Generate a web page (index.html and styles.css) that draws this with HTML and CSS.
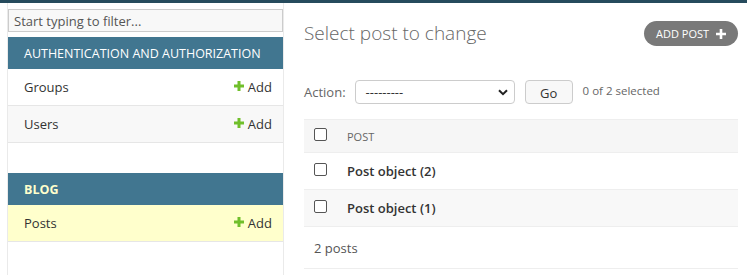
FILE: index.html
```html
<!DOCTYPE html>
<html>
<head>
<meta charset="utf-8">
<link rel="stylesheet" href="styles.css">
</head>
<body>
<div class="topbar"></div>
<div class="layout">
  <div class="toggle"></div>
  <nav class="sidebar">
    <input class="filter" type="text" placeholder="Start typing to filter...">
    <div class="module">
      <div class="caption">Authentication and Authorization</div>
      <div class="row"><span class="name">Groups</span><span class="add"><svg class="plus" viewBox="0 0 10 10"><path d="M3.5 0h3v3.5H10v3H6.5V10h-3V6.5H0v-3h3.5z" fill="#70bf2b"/></svg>Add</span></div>
      <div class="row alt"><span class="name">Users</span><span class="add"><svg class="plus" viewBox="0 0 10 10"><path d="M3.5 0h3v3.5H10v3H6.5V10h-3V6.5H0v-3h3.5z" fill="#70bf2b"/></svg>Add</span></div>
    </div>
    <div class="module current">
      <div class="caption">Blog</div>
      <div class="row active"><span class="name">Posts</span><span class="add"><svg class="plus" viewBox="0 0 10 10"><path d="M3.5 0h3v3.5H10v3H6.5V10h-3V6.5H0v-3h3.5z" fill="#70bf2b"/></svg>Add</span></div>
    </div>
  </nav>
  <main class="content">
    <div class="head">
      <h1 class="title">Select post to change</h1>
      <a class="addbtn">Add post<svg class="addplus" viewBox="0 0 10 10"><path d="M3.7 0h2.6v3.7H10v2.6H6.3V10H3.7V6.3H0V3.7h3.7z" fill="#fff"/></svg></a>
    </div>
    <div class="actions">
      <span class="label">Action:</span>
      <span class="select"><span>---------</span><svg class="chev" viewBox="0 0 10 7"><path d="M1 1.2l4 4 4-4" fill="none" stroke="#222" stroke-width="2"/></svg></span>
      <span class="go">Go</span>
      <span class="counter">0 of 2 selected</span>
    </div>
    <div class="table">
      <div class="trow thead"><span class="cb"></span><span class="col">Post</span></div>
      <div class="trow"><span class="cb"></span><span class="obj">Post object (2)</span></div>
      <div class="trow alt"><span class="cb"></span><span class="obj">Post object (1)</span></div>
    </div>
    <div class="paginator">2 posts</div>
  </main>
</div>
</body>
</html>
```
FILE: styles.css
```css
* { box-sizing: border-box; }
html, body { margin: 0; padding: 0; background: #fff; }
body {
  font-family: "Open Sans", "Noto Sans", sans-serif;
  font-size: 13px;
  color: #333;
  width: 747px;
  height: 275px;
  overflow: hidden;
}
.topbar { height: 3px; background: #264b5d; }
.layout { display: flex; height: 272px; }
.toggle { width: 8px; border-right: 1px solid #eaeaea; flex: none; }
.sidebar {
  width: 276px;
  flex: none;
  border-right: 1px solid #eaeaea;
  padding-top: 6px;
}
.filter {
  display: block;
  width: 275px;
  height: 23px;
  margin: 0 0 5px 0;
  padding: 2px 5px;
  border: 1px solid #ccc;
  background: #f8f8f8;
  font-family: inherit;
  font-size: 13px;
  color: #333;
  outline: none;
}
.filter::placeholder { color: #555; }
.module { margin-bottom: 30px; width: 275px; }
.caption {
  height: 32px;
  background: #417690;
  color: #fff;
  text-transform: uppercase;
  font-size: 12.5px;
  padding-left: 16px;
  display: flex;
  align-items: center;
}
.current .caption { color: #ffc; font-weight: 700; }
.row {
  height: 37px;
  border-bottom: 1px solid #e6e6e6;
  display: flex;
  align-items: center;
  justify-content: space-between;
  padding: 0 11px 0 16px;
  color: #333;
}
.row.alt { background: #f8f8f8; }
.row.active { background: #ffc; }
.add { display: flex; align-items: center; }
.plus { width: 10px; height: 10px; margin-right: 4px; margin-top: -3px; }
.content { flex: 1; padding: 0 9px 0 20px; }
.head {
  display: flex;
  justify-content: space-between;
  align-items: flex-start;
  height: 77px;
}
.title {
  margin: 16px 0 0 0;
  font-size: 19px;
  font-weight: 300;
  color: #666;
  line-height: 28px;
}
.addbtn {
  margin-top: 18px;
  height: 25px;
  width: 94px;
  border-radius: 13px;
  background: #797979;
  color: #fff;
  text-transform: uppercase;
  font-size: 11px;
  display: flex;
  align-items: center;
  padding-left: 12px;
}
.addplus { width: 10px; height: 10px; margin-left: 7px; }
.actions { display: flex; align-items: center; height: 24px; }
.label { color: #666; margin-right: 9px; }
.select {
  width: 160px;
  height: 24px;
  border: 1px solid #ccc;
  border-radius: 4px;
  display: flex;
  align-items: center;
  justify-content: space-between;
  padding: 0 6px 0 10px;
  color: #333;
}
.chev { width: 10px; height: 7px; }
.go {
  margin-left: 10px;
  width: 48px;
  height: 24px;
  border: 1px solid #ccc;
  border-radius: 4px;
  background: #f8f8f8;
  display: flex;
  align-items: center;
  justify-content: center;
  color: #333;
  padding-top: 2px;
}
.counter { margin-left: 10px; font-size: 11.5px; color: #666; margin-top: -3px; }
.table { margin-top: 15px; }
.trow {
  height: 37px;
  border-bottom: 1px solid #eee;
  display: flex;
  align-items: center;
  padding-left: 10px;
}
.thead { height: 34px; background: #f6f6f6; border-top: 1px solid #eee; }
.trow.alt { background: #f8f8f8; }
.cb {
  width: 13px;
  height: 13px;
  border: 1px solid #555;
  border-radius: 2px;
  margin-right: 20px;
  margin-top: -3px;
  background: #fff;
}
.col { font-size: 11px; text-transform: uppercase; color: #666; }
.obj { font-weight: 600; color: #333; }
.paginator {
  height: 42px;
  border-bottom: 1px solid #eee;
  display: flex;
  align-items: center;
  padding-left: 10px;
  color: #555;
}
```
